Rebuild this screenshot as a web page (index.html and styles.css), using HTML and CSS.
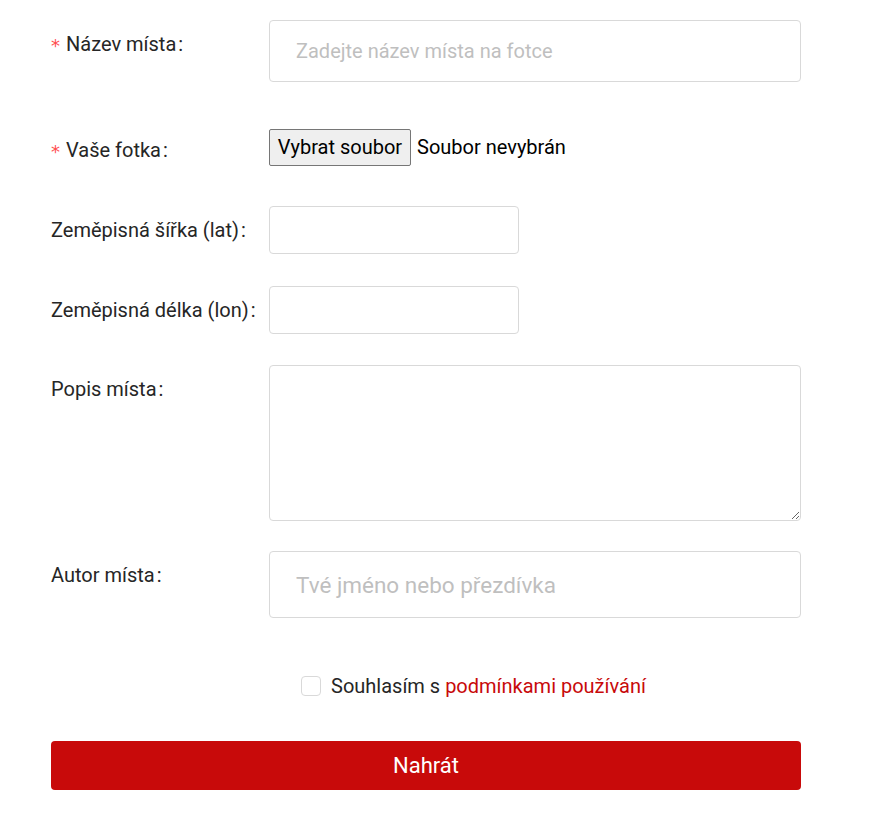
FILE: index.html
```html
<!DOCTYPE html>
<html lang="cs">
<head>
<meta charset="utf-8">
<link rel="stylesheet" href="styles.css">
</head>
<body>
<form class="form">
  <div class="row row-first">
    <label class="label"><span class="req">*</span>Název místa<span class="colon">:</span></label>
    <div class="control"><input class="input input-name" type="text" placeholder="Zadejte název místa na fotce"></div>
  </div>
  <div class="row row-file">
    <label class="label"><span class="req">*</span>Vaše fotka<span class="colon">:</span></label>
    <div class="control file-control"><span class="file-btn">Vybrat soubor</span><span class="file-text">Soubor nevybrán</span></div>
  </div>
  <div class="row">
    <label class="label">Zeměpisná šířka (lat)<span class="colon">:</span></label>
    <div class="control"><input class="input input-small" type="text"></div>
  </div>
  <div class="row row-tight">
    <label class="label">Zeměpisná délka (lon)<span class="colon">:</span></label>
    <div class="control"><input class="input input-small" type="text"></div>
  </div>
  <div class="row row-area">
    <label class="label">Popis místa<span class="colon">:</span></label>
    <div class="control"><textarea class="textarea"></textarea></div>
  </div>
  <div class="row">
    <label class="label">Autor místa<span class="colon">:</span></label>
    <div class="control"><input class="input input-author" type="text" placeholder="Tvé jméno nebo přezdívka"></div>
  </div>
  <div class="agree">
    <span class="checkbox"></span>
    <span class="agree-text">Souhlasím s <a class="link" href="#">podmínkami používání</a></span>
  </div>
  <button class="submit" type="button">Nahrát</button>
</form>
</body>
</html>
```
FILE: styles.css
```css
* { box-sizing: border-box; }
html, body { margin: 0; padding: 0; background: #fff; }
body {
  font-family: Roboto, "Liberation Sans", Arial, sans-serif;
  color: #262626;
  padding: 20px 0 0 51px;
}
.form { width: 750px; }
.row {
  display: grid;
  grid-template-columns: 218px 1fr;
  margin-bottom: 32px;
}
.row-first { margin-bottom: 44px; }
.row-tight { margin-bottom: 31px; }
.row-area { margin-bottom: 30px; }
.label {
  font-size: 20px;
  line-height: 48px;
  height: 48px;
  color: #262626;
  white-space: nowrap;
}
.req {
  color: #ff4d4f;
  font-size: 18px;
  margin-right: 6px;
  font-family: SimSun, "DejaVu Sans", sans-serif;
  position: relative;
  top: 1px;
}
.colon { margin-left: 2px; }
.input, .textarea {
  display: block;
  border: 1px solid #d9d9d9;
  border-radius: 4px;
  background: #fff;
  font-family: Roboto, "Liberation Sans", Arial, sans-serif;
  color: #262626;
  outline: none;
}
.input::placeholder { color: #bfbfbf; }
.input-name {
  width: 532px;
  height: 62px;
  padding: 0 26px;
  font-size: 20px;
}
.input-small {
  width: 250px;
  height: 48px;
  padding: 0 12px;
  font-size: 20px;
}
.textarea {
  width: 532px;
  height: 156px;
  resize: vertical;
  padding: 8px 12px;
  font-size: 20px;
}
.input-author {
  width: 532px;
  height: 67px;
  padding: 0 26px;
  font-size: 22.5px;
}
.file-control { display: flex; align-items: center; height: 48px; margin-top: -3px; }
.file-btn {
  display: inline-flex;
  align-items: center;
  justify-content: center;
  height: 37px;
  width: 142px;
  border: 1px solid #767676;
  border-radius: 2px;
  background: #efefef;
  font-size: 20px;
  color: #000;
}
.file-text { font-size: 20px; margin-left: 6px; color: #000; }
.agree {
  display: flex;
  align-items: center;
  margin-left: 250px;
  margin-top: 56px;
  height: 24px;
}
.checkbox {
  width: 20px;
  height: 20px;
  border: 1px solid #d9d9d9;
  border-radius: 4px;
  background: #fff;
  margin-right: 10px;
}
.agree-text { font-size: 20px; color: #262626; }
.link { color: #c80a0a; text-decoration: none; }
.submit {
  display: block;
  width: 750px;
  height: 49px;
  margin-top: 43px;
  border: none;
  border-radius: 4px;
  background: #c80a0a;
  color: #fff;
  font-family: Roboto, "Liberation Sans", Arial, sans-serif;
  font-size: 22px;
  font-weight: 400;
  cursor: pointer;
}
```
